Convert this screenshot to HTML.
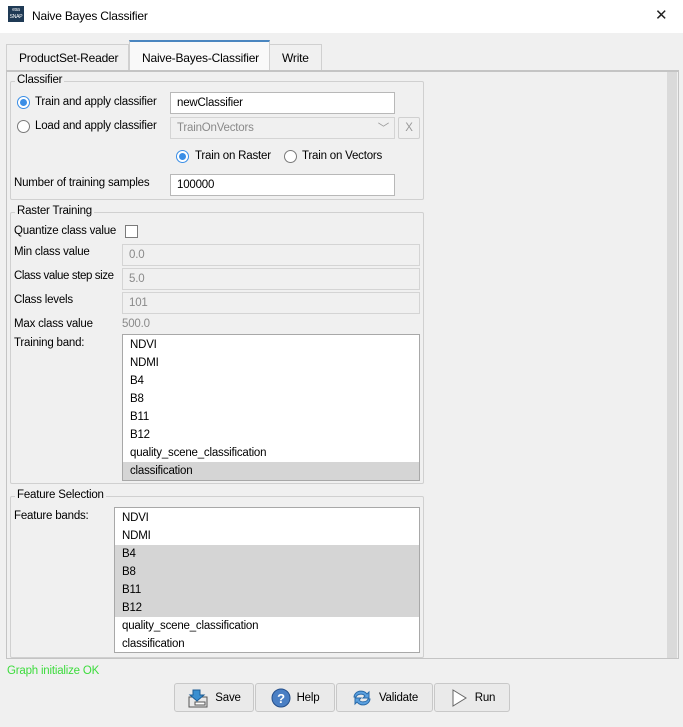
<!DOCTYPE html>
<html><head><style>
*{box-sizing:border-box;margin:0;padding:0}
body{width:683px;height:727px;background:#f0f0f0;font-family:"Liberation Sans",sans-serif;font-size:11.5px;letter-spacing:-0.2px;color:#000;position:relative;overflow:hidden}
.a{position:absolute;white-space:nowrap}
.in{position:absolute;background:#fff;border:1px solid #b8b8b8;padding:4px 0 0 6px}
.dis{background:#f0f0f0;border-color:#d4d4d4;color:#8a8a8a}
.grp{position:absolute;border:1px solid #d0d0d0;border-radius:2px}
.gt{position:absolute;background:#f0f0f0;padding:0 2px;top:-8px;left:4px}
.rad{position:absolute;width:13px;height:13px;border-radius:50%;border:1px solid #7a7a7a;background:#fff}
.rad.on{border-color:#3a8ee6}
.rad.on::after{content:"";position:absolute;left:2px;top:2px;width:7px;height:7px;border-radius:50%;background:#3a8ee6}
.list{position:absolute;background:#fff;border:1px solid #a8a8a8}
.list div{height:18px;line-height:18px;padding-left:7px}
.list .s{background:#d5d5d5}
.btn{position:absolute;top:683px;height:29px;border:1px solid #c8c8c8;border-radius:3px;background:#eaeaea;display:flex;align-items:center;justify-content:center;gap:6px}
</style></head><body>
<div class="a" style="left:0;top:0;width:683px;height:33px;background:#fff"></div>
<div class="a" style="left:8px;top:6px;width:16px;height:16px;background:#1f3a55;color:#fff;font-size:5px;line-height:7px;text-align:center;padding-top:1px">esa<br>SNAP</div>
<div class="a" style="left:32px;top:9px;font-size:12px">Naive Bayes Classifier</div>
<div class="a" style="left:655px;top:6px;font-size:15px;font-weight:300;color:#222">✕</div>

<div class="a" style="left:6px;top:44px;width:123px;height:26px;border:1px solid #d0d0d0;border-bottom:none;background:#f0f0f0;padding:6px 0 0 12px;font-size:12px">ProductSet-Reader</div>
<div class="a" style="left:129px;top:40px;width:141px;height:31px;border:1px solid #d0d0d0;border-top:2px solid #4a86c0;border-bottom:none;background:#f9f9f9;padding:9px 0 0 12px;font-size:12px">Naive-Bayes-Classifier</div>
<div class="a" style="left:270px;top:44px;width:52px;height:26px;border:1px solid #d0d0d0;border-left:none;border-bottom:none;padding:6px 0 0 12px;font-size:12px">Write</div>
<div class="a" style="left:6px;top:70px;width:673px;height:589px;border:1px solid #c4c4c4;border-top:2px solid #c4c4c4"></div>
<div class="a" style="left:667px;top:72px;width:10px;height:586px;background:#dadada"></div>

<div class="grp" style="left:10px;top:81px;width:414px;height:119px"><div class="gt">Classifier</div></div>
<div class="rad on" style="left:17px;top:96px"></div><div class="a" style="left:35px;top:96px">Train and apply classifier</div>
<div class="in" style="left:170px;top:92px;width:225px;height:22px">newClassifier</div>
<div class="rad" style="left:17px;top:120px"></div><div class="a" style="left:35px;top:120px">Load and apply classifier</div>
<div class="in dis" style="left:170px;top:117px;width:225px;height:22px">TrainOnVectors<span style="position:absolute;right:5px;top:2px;color:#999">﹀</span></div>
<div class="a" style="left:398px;top:117px;width:22px;height:22px;border:1px solid #d0d0d0;border-radius:2px;color:#999;text-align:center;padding-top:4px">X</div>
<div class="rad on" style="left:176px;top:150px"></div><div class="a" style="left:195px;top:150px">Train on Raster</div>
<div class="rad" style="left:284px;top:150px"></div><div class="a" style="left:302px;top:150px">Train on Vectors</div>
<div class="a" style="left:14px;top:177px">Number of training samples</div>
<div class="in" style="left:170px;top:174px;width:225px;height:22px">100000</div>

<div class="grp" style="left:10px;top:212px;width:414px;height:272px"><div class="gt">Raster Training</div></div>
<div class="a" style="left:14px;top:225px">Quantize class value</div>
<div class="a" style="left:125px;top:225px;width:13px;height:13px;border:1px solid #7a7a7a;background:#fff"></div>
<div class="a" style="left:14px;top:246px">Min class value</div>
<div class="in dis" style="left:122px;top:244px;width:298px;height:22px">0.0</div>
<div class="a" style="left:14px;top:270px;letter-spacing:-0.4px">Class value step size</div>
<div class="in dis" style="left:122px;top:268px;width:298px;height:22px">5.0</div>
<div class="a" style="left:14px;top:294px">Class levels</div>
<div class="in dis" style="left:122px;top:292px;width:298px;height:22px">101</div>
<div class="a" style="left:14px;top:318px">Max class value</div>
<div class="a" style="left:122px;top:318px;color:#8a8a8a">500.0</div>
<div class="a" style="left:14px;top:337px">Training band:</div>
<div class="list" style="left:122px;top:334px;width:298px;height:147px;padding-top:1px">
<div>NDVI</div><div>NDMI</div><div>B4</div><div>B8</div><div>B11</div><div>B12</div><div>quality_scene_classification</div><div class="s">classification</div></div>

<div class="grp" style="left:10px;top:496px;width:414px;height:162px"><div class="gt">Feature Selection</div></div>
<div class="a" style="left:14px;top:510px">Feature bands:</div>
<div class="list" style="left:114px;top:507px;width:306px;height:146px;padding-top:1px">
<div>NDVI</div><div>NDMI</div><div class="s">B4</div><div class="s">B8</div><div class="s">B11</div><div class="s">B12</div><div>quality_scene_classification</div><div>classification</div></div>

<div class="a" style="left:7px;top:665px;color:#3ddc3d">Graph initialize OK</div>

<div class="btn" style="left:174px;width:80px"><svg width="22" height="20"><rect x="2" y="9" width="18" height="10" fill="#e8e8e8" stroke="#555"/><rect x="8" y="14" width="10" height="3" fill="#fff" stroke="#555"/><path d="M6 2h7v5h4l-7 6-7-6h3z" fill="#3a8fd0" stroke="#1d5d95"/></svg>Save</div>
<div class="btn" style="left:255px;width:80px"><svg width="20" height="20"><circle cx="10" cy="10" r="9" fill="#4a7fc4" stroke="#254f8a"/><text x="10" y="15" font-size="13" font-weight="bold" fill="#fff" text-anchor="middle" font-family="Liberation Sans">?</text></svg>Help</div>
<div class="btn" style="left:336px;width:97px"><svg width="22" height="20"><path d="M3 9a7 6 0 0 1 13-3l2-2v6h-6l2-2a5 4 0 0 0-9 1z" fill="#5aa0e0" stroke="#2a6aa8"/><path d="M19 11a7 6 0 0 1-13 3l-2 2v-6h6l-2 2a5 4 0 0 0 9-1z" fill="#5aa0e0" stroke="#2a6aa8"/></svg>Validate</div>
<div class="btn" style="left:434px;width:76px"><svg width="20" height="20"><path d="M4 2l13 8-13 8z" fill="#fff" stroke="#666"/></svg>Run</div>
</body></html>
